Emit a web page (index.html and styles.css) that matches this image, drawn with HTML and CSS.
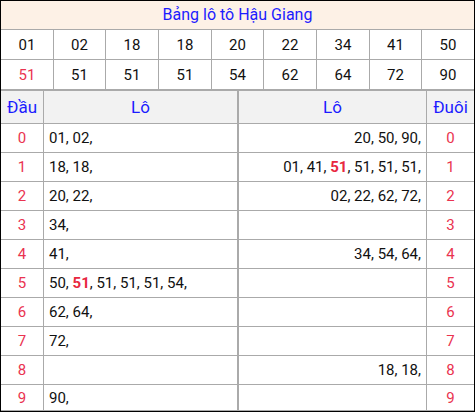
FILE: index.html
```html
<!DOCTYPE html>
<html lang="vi">
<head>
<meta charset="utf-8">
<title>Bảng lô tô Hậu Giang</title>
<link rel="stylesheet" href="styles.css">
</head>
<body>
<div class="board">
  <div class="title">Bảng lô tô Hậu Giang</div>
  <div class="nums">
    <div class="num">01</div><div class="num">02</div><div class="num">18</div><div class="num">18</div><div class="num">20</div><div class="num">22</div><div class="num">34</div><div class="num">41</div><div class="num">50</div>
    <div class="num red">51</div><div class="num">51</div><div class="num">51</div><div class="num">51</div><div class="num">54</div><div class="num">62</div><div class="num">64</div><div class="num">72</div><div class="num">90</div>
  </div>
  <div class="lower">
    <div class="head dau">Đầu</div><div class="head lo-l">Lô</div><div class="head">Lô</div><div class="head">Đuôi</div>

    <div class="digit">0</div><div class="lo-l"><span>01, 02,</span></div><div class="lo-r"><span>20, 50, 90,</span></div><div class="digit">0</div>
    <div class="digit">1</div><div class="lo-l"><span>18, 18,</span></div><div class="lo-r"><span>01, 41, <b class="hl">51</b>, 51, 51, 51,</span></div><div class="digit">1</div>
    <div class="digit">2</div><div class="lo-l"><span>20, 22,</span></div><div class="lo-r"><span>02, 22, 62, 72,</span></div><div class="digit">2</div>
    <div class="digit">3</div><div class="lo-l"><span>34,</span></div><div class="lo-r"></div><div class="digit">3</div>
    <div class="digit">4</div><div class="lo-l"><span>41,</span></div><div class="lo-r"><span>34, 54, 64,</span></div><div class="digit">4</div>
    <div class="digit">5</div><div class="lo-l"><span>50, <b class="hl">51</b>, 51, 51, 51, 54,</span></div><div class="lo-r"></div><div class="digit">5</div>
    <div class="digit">6</div><div class="lo-l"><span>62, 64,</span></div><div class="lo-r"></div><div class="digit">6</div>
    <div class="digit">7</div><div class="lo-l"><span>72,</span></div><div class="lo-r"></div><div class="digit">7</div>
    <div class="digit">8</div><div class="lo-l"></div><div class="lo-r"><span>18, 18,</span></div><div class="digit">8</div>
    <div class="digit">9</div><div class="lo-l"><span>90,</span></div><div class="lo-r"></div><div class="digit">9</div>
  </div>
</div>
</body>
</html>
```
FILE: styles.css
```css
html, body {
  margin: 0;
  padding: 0;
  background: #fff;
}

body {
  font-family: Roboto, "Liberation Sans", sans-serif;
  color: #111;
}

.board {
  width: 473px;
  border: 1px solid #000;
  background: #fff;
}

.title {
  height: 28px;
  line-height: 28px;
  text-align: center;
  background: #fdf1e6;
  color: #1c1cff;
  font-size: 16px;
  border-bottom: 1px solid #aaa;
}

.nums {
  display: grid;
  grid-template-columns: 52px 51px 52px 52px 51px 52px 52px 51px 52px;
  grid-auto-rows: 29px;
  gap: 1px;
  background: #aaa;
  border-bottom: 1px solid #aaa;
}

.num {
  background: #fff;
  display: flex;
  align-items: center;
  justify-content: center;
  font-size: 15px;
}

.red {
  color: #ea3350;
}

.lower {
  display: grid;
  grid-template-columns: 42px 194px 187px 47px;
  grid-template-rows: 32px repeat(9, 28px) 25px;
  gap: 1px;
  background: #aaa;
  border-top: 1px solid #aaa;
  border-bottom: 1px solid #aaa;
}

.lower > div {
  background: #fff;
  display: flex;
  align-items: center;
  font-size: 15px;
  white-space: nowrap;
}

.lower > .head {
  background: #f2f2f2;
  color: #1c1cff;
  font-size: 17px;
  justify-content: center;
}

.lower > .lo-l {
  border-right: 1px solid #aaa;
  padding-left: 5px;
}

.lower > .head.lo-l {
  padding-left: 0;
}

.lower > .lo-r {
  justify-content: flex-end;
  padding-right: 5px;
}

.lower > .digit {
  justify-content: center;
  color: #ea3350;
}

.hl {
  color: #e8283f;
  font-weight: bold;
}
```
